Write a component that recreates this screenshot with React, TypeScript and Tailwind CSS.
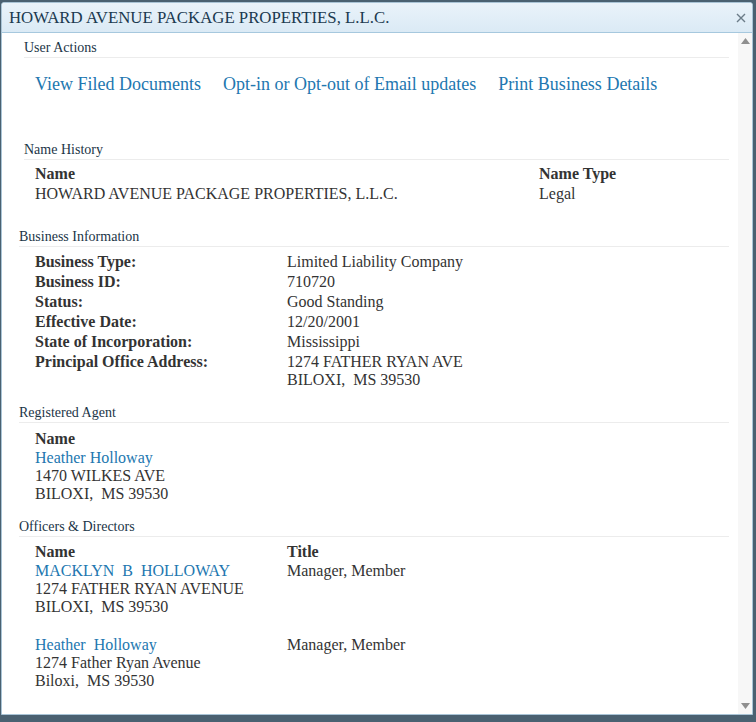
import React from 'react';

const serif = { fontFamily: '"Liberation Serif", "Times New Roman", serif' };

function SectionTitle({ children, indent }: { children: React.ReactNode; indent: string }) {
  return (
    <div className={`${indent} mr-[9px] border-b border-[#ececec] pb-[1px] text-[14px] leading-[16px] text-[#1b3547]`}>
      {children}
    </div>
  );
}

const businessRows: [string, string[]][] = [
  ['Business Type:', ['Limited Liability Company']],
  ['Business ID:', ['710720']],
  ['Status:', ['Good Standing']],
  ['Effective Date:', ['12/20/2001']],
  ['State of Incorporation:', ['Mississippi']],
  ['Principal Office Address:', ['1274 FATHER RYAN AVE', 'BILOXI,\u00a0 MS 39530']],
];

const officers = [
  { name: 'MACKLYN\u00a0 B\u00a0 HOLLOWAY', title: 'Manager, Member', addr: ['1274 FATHER RYAN AVENUE', 'BILOXI,\u00a0 MS 39530'] },
  { name: 'Heather\u00a0 Holloway', title: 'Manager, Member', addr: ['1274 Father Ryan Avenue', 'Biloxi,\u00a0 MS 39530'] },
];

export default function App() {
  return (
    <div className="h-[722px] w-[756px] overflow-hidden bg-[#4a6171] pt-[2px] pl-[1px]" style={serif}>
      <div className="flex h-[713px] w-[752px] flex-col overflow-hidden rounded-t-[3px] border border-[#a9c4d6] bg-white">
        {/* title bar */}
        <div className="flex h-[30px] shrink-0 items-center justify-between border-b border-[#a6c8de] bg-gradient-to-b from-[#e9f3fa] to-[#dbeaf5] pl-[7px] pr-[4px]">
          <span className="text-[16.8px] leading-[20px] text-[#1b3a50]">HOWARD AVENUE PACKAGE PROPERTIES, L.L.C.</span>
          <svg width="14" height="14" viewBox="0 0 14 14">
            <path d="M3 3 L11 11 M11 3 L3 11" stroke="#6b7c88" strokeWidth="1.4" />
          </svg>
        </div>

        <div className="flex min-h-0 flex-1">
          <div className="flex-1 pt-[7px] text-[16px] text-[#333]">
            <SectionTitle indent="ml-[22px]">User Actions</SectionTitle>
            <div className="ml-[33px] mt-[16px] flex gap-[22px] text-[18px] leading-[20px] text-[#2277b0]">
              <span>View Filed Documents</span>
              <span>Opt-in or Opt-out of Email updates</span>
              <span>Print Business Details</span>
            </div>

            <div className="mt-[48px]">
              <SectionTitle indent="ml-[22px]">Name History</SectionTitle>
              <div className="ml-[33px] mt-[4px] flex leading-[20px]">
                <div className="w-[504px]">
                  <div className="font-bold">Name</div>
                  <div>HOWARD AVENUE PACKAGE PROPERTIES, L.L.C.</div>
                </div>
                <div>
                  <div className="font-bold">Name Type</div>
                  <div>Legal</div>
                </div>
              </div>
            </div>

            <div className="mt-[25px]">
              <SectionTitle indent="ml-[17px]">Business Information</SectionTitle>
              <div className="ml-[33px] mt-[5px]">
                {businessRows.map(([label, vals]) => (
                  <div key={label} className="flex py-[1px] leading-[18px]">
                    <div className="w-[252px] font-bold">{label}</div>
                    <div>
                      {vals.map((v) => (
                        <div key={v}>{v}</div>
                      ))}
                    </div>
                  </div>
                ))}
              </div>
            </div>

            <div className="mt-[15px]">
              <SectionTitle indent="ml-[17px]">Registered Agent</SectionTitle>
              <div className="ml-[33px] mt-[6px] leading-[19px]">
                <div className="font-bold">Name</div>
                <div className="text-[#2277b0]">Heather Holloway</div>
                <div className="leading-[18px]">1470 WILKES AVE</div>
                <div className="leading-[18px]">BILOXI,&nbsp; MS 39530</div>
              </div>
            </div>

            <div className="mt-[16px]">
              <SectionTitle indent="ml-[17px]">Officers &amp; Directors</SectionTitle>
              <div className="ml-[33px] mt-[6px] leading-[18px]">
                <div className="flex">
                  <div className="w-[252px] font-bold">Name</div>
                  <div className="font-bold">Title</div>
                </div>
                {officers.map((o, i) => (
                  <div key={o.name} className={`flex ${i > 0 ? 'mt-[20px]' : 'mt-[1px]'}`}>
                    <div className="w-[252px]">
                      <div className="text-[#2277b0]">{o.name}</div>
                      {o.addr.map((a) => (
                        <div key={a}>{a}</div>
                      ))}
                    </div>
                    <div>{o.title}</div>
                  </div>
                ))}
              </div>
            </div>
          </div>

          {/* scrollbar */}
          <div className="flex w-[14px] shrink-0 flex-col items-center justify-between bg-[#f7f7f7] py-[5px]">
            <svg width="9" height="6" viewBox="0 0 9 6">
              <path d="M0 6 L4.5 0 L9 6 Z" fill="#8f8f8f" />
            </svg>
            <svg width="9" height="6" viewBox="0 0 9 6">
              <path d="M0 0 L9 0 L4.5 6 Z" fill="#8f8f8f" />
            </svg>
          </div>
        </div>
      </div>
    </div>
  );
}
